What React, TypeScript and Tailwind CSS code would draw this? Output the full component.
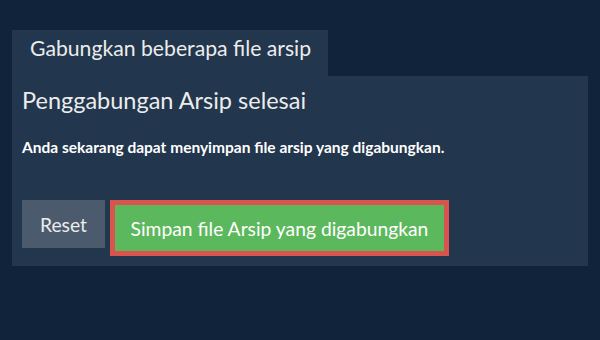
export default function App() {
  return (
    <div className="w-[600px] h-[340px] bg-[#11233a] pt-[30px] px-[12px] font-['Lato',sans-serif] text-[#ececec]">
      <div className="flex">
        <div className="h-[46px] w-[316px] bg-[#22364d] pl-[18px] pt-[6px] text-[21.2px] leading-[25px]">
          Gabungkan beberapa file arsip
        </div>
      </div>
      <div className="h-[190px] w-[576px] bg-[#22364d] px-[10px] pt-[10px]">
        <h1 className="text-[23.5px] leading-[28px]">Penggabungan Arsip selesai</h1>
        <p className="mt-[24px] text-[15.5px] font-bold leading-[19px] text-white">
          Anda sekarang dapat menyimpan file arsip yang digabungkan.
        </p>
        <div className="mt-[43px] flex items-start gap-[5px]">
          <button className="h-[48px] w-[83px] bg-[#4b5b6d] text-[19.3px] leading-[23px]">Reset</button>
          <button className="h-[56px] w-[339px] border-[5px] border-[#d9534f] bg-[#5cb85c] text-[19.3px] leading-[23px] text-white">
            Simpan file Arsip yang digabungkan
          </button>
        </div>
      </div>
    </div>
  )
}
